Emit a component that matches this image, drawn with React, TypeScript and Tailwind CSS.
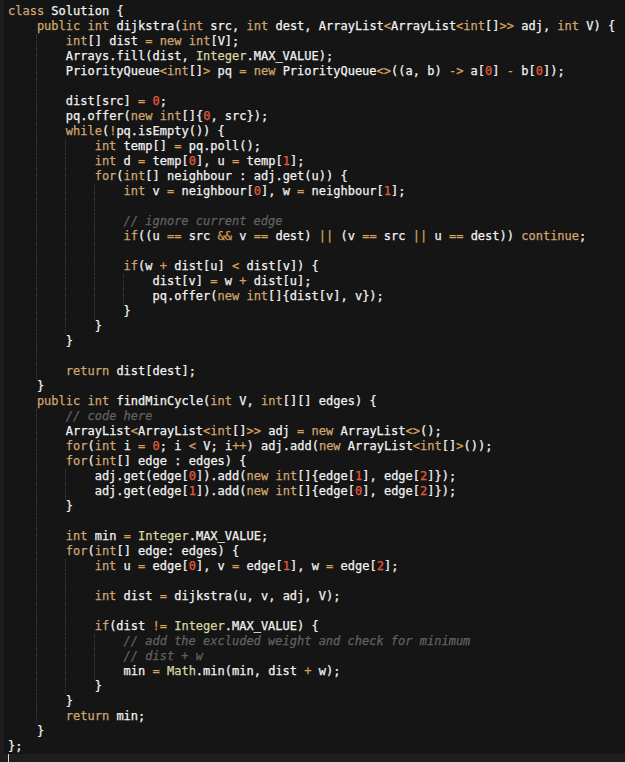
import React from "react";

// Source shown in the editor. Blank lines keep their indentation so the guides carry through.
const code: string[] = [
  "class Solution {",
  "    public int dijkstra(int src, int dest, ArrayList<ArrayList<int[]>> adj, int V) {",
  "        int[] dist = new int[V];",
  "        Arrays.fill(dist, Integer.MAX_VALUE);",
  "        PriorityQueue<int[]> pq = new PriorityQueue<>((a, b) -> a[0] - b[0]);",
  "        ",
  "        dist[src] = 0;",
  "        pq.offer(new int[]{0, src});",
  "        while(!pq.isEmpty()) {",
  "            int temp[] = pq.poll();",
  "            int d = temp[0], u = temp[1];",
  "            for(int[] neighbour : adj.get(u)) {",
  "                int v = neighbour[0], w = neighbour[1];",
  "                ",
  "                // ignore current edge",
  "                if((u == src && v == dest) || (v == src || u == dest)) continue;",
  "                ",
  "                if(w + dist[u] < dist[v]) {",
  "                    dist[v] = w + dist[u];",
  "                    pq.offer(new int[]{dist[v], v});",
  "                }",
  "            }",
  "        }",
  "        ",
  "        return dist[dest];",
  "    }",
  "    public int findMinCycle(int V, int[][] edges) {",
  "        // code here",
  "        ArrayList<ArrayList<int[]>> adj = new ArrayList<>();",
  "        for(int i = 0; i < V; i++) adj.add(new ArrayList<int[]>());",
  "        for(int[] edge : edges) {",
  "            adj.get(edge[0]).add(new int[]{edge[1], edge[2]});",
  "            adj.get(edge[1]).add(new int[]{edge[0], edge[2]});",
  "        }",
  "        ",
  "        int min = Integer.MAX_VALUE;",
  "        for(int[] edge: edges) {",
  "            int u = edge[0], v = edge[1], w = edge[2];",
  "            ",
  "            int dist = dijkstra(u, v, adj, V);",
  "            ",
  "            if(dist != Integer.MAX_VALUE) {",
  "                // add the excluded weight and check for minimum",
  "                // dist + w",
  "                min = Math.min(min, dist + w);",
  "            }",
  "        }",
  "        return min;",
  "    }",
  "};",
];

const keywords = new Set([
  "class",
  "public",
  "int",
  "new",
  "while",
  "for",
  "if",
  "return",
  "continue",
]);
const builtins = new Set(["Integer", "Math"]);

const tokenRe =
  /(\/\/.*$)|(\b\d+\b)|([A-Za-z_][A-Za-z0-9_]*)|(->|==|!=|\+\+|\|\||&&|[=<>+\-!])|(\s+)|(.)/g;

function highlight(text: string) {
  const out: React.ReactNode[] = [];
  let m: RegExpExecArray | null;
  let i = 0;
  tokenRe.lastIndex = 0;
  while ((m = tokenRe.exec(text)) !== null) {
    const [tok, comment, num, word, op] = m;
    let cls = "text-[#f2f2f2]";
    if (comment) cls = "italic text-[#626262]";
    else if (num) cls = "text-[#e05c3c]";
    else if (word && keywords.has(word)) cls = "text-[#d0a670]";
    else if (word && builtins.has(word)) cls = "text-[#d8d6a2]";
    else if (op) cls = "text-[#d8a058]";
    out.push(
      <span key={i++} className={cls}>
        {tok}
      </span>
    );
  }
  return out;
}

const CodeLine: React.FC<{ text: string }> = ({ text }) => {
  const indent = text.length - text.trimStart().length;
  const chunks = Math.floor(indent / 4);
  return (
    <div className="flex h-[15px] whitespace-pre">
      {Array.from({ length: chunks }).map((_, k) => (
        <span
          key={k}
          className={
            (k + 1) * 4 < indent
              ? "inline-block w-[4ch] h-[15px] box-border border-r border-dotted border-[#424242]"
              : "inline-block w-[4ch] h-[15px]"
          }
        />
      ))}
      <span>{highlight(text.slice(chunks * 4))}</span>
    </div>
  );
};

export default function App() {
  return (
    <div className="flex h-[762px] w-[625px] overflow-hidden bg-[#151515]">
      <div className="w-[4px] shrink-0 bg-[#1c1c1c]" />
      <div
        className="flex-1 pt-[4px] text-[12px] leading-[15px] [-webkit-text-stroke:0.25px]"
        style={{ fontFamily: '"DejaVu Sans Mono", "Liberation Mono", monospace' }}
      >
        <div className="pl-[4px]">
          {code.map((line, idx) => (
            <CodeLine key={idx} text={line} />
          ))}
        </div>
        {/* active line with the caret */}
        <div className="flex h-[15px] bg-[#1e1e1e] pl-[4px]">
          <span className="w-px h-[15px] bg-[#d8d8d8]" />
        </div>
      </div>
    </div>
  );
}
